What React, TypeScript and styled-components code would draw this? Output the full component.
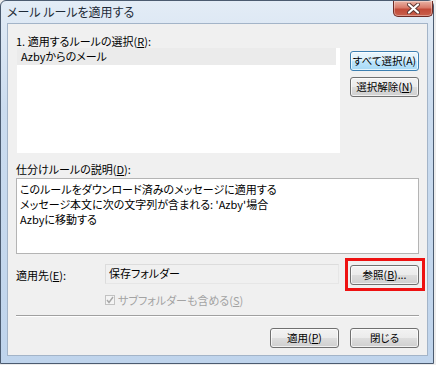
import styled, { createGlobalStyle } from "styled-components";

const GlobalStyle = createGlobalStyle`
  html, body {
    margin: 0;
    padding: 0;
    background: #ececec;
  }
  body {
    font-family: "Noto Sans CJK JP", "Noto Sans", sans-serif;
    font-size: 11px;
    font-feature-settings: "palt";
    color: #000;
  }
`;

const Window = styled.div`
  width: 434px;
  height: 364px;
  box-sizing: border-box;
  border: 1px solid #4b5b70;
  border-radius: 6px 6px 0 0;
  background: linear-gradient(180deg, #e3ecf6 0%, #cbdcef 30%, #bfd4ec 100%);
  display: flex;
  flex-direction: column;
`;

const TitleBar = styled.div`
  height: 22px;
  display: flex;
  align-items: flex-start;
  justify-content: space-between;
  padding-left: 6px;
`;

const Title = styled.div`
  font-size: 12px;
  line-height: 22px;
  color: #1e2a38;
`;

const CloseButton = styled.div`
  width: 40px;
  height: 16px;
  box-sizing: border-box;
  border: 1px solid #6e2b25;
  border-top: none;
  border-radius: 0 0 5px 5px;
  background: linear-gradient(180deg, #eab4a6 0%, #d87a69 45%, #c24a38 55%, #c9604c 100%);
  box-shadow: inset 0 0 0 1px rgba(255, 255, 255, 0.35);
  display: flex;
  align-items: center;
  justify-content: center;
`;

const Client = styled.div`
  flex: 1;
  margin: 0 5px 7px 6px;
  border: 1px solid #a3b4c8;
  background: #f0f0f0;
  padding: 11px 8px 0 8px;
  display: flex;
  flex-direction: column;
`;

const TopRow = styled.div`
  display: flex;
  gap: 10px;
`;

const LeftColumn = styled.div`
  width: 324px;
  display: flex;
  flex-direction: column;
`;

const Label = styled.div<{ $mt?: number }>`
  line-height: 13px;
  height: 13px;
  margin-top: ${(p) => p.$mt ?? 0}px;
  white-space: nowrap;
`;

const Key = styled.span`
  text-decoration: underline;
  text-underline-offset: 1px;
`;

const ListBox = styled.div`
  margin-left: 1px;
  height: 105px;
  background: #fff;
`;

const ListRow = styled.div<{ $selected?: boolean }>`
  width: 319px;
  height: 17px;
  line-height: 17px;
  padding-left: 4px;
  box-sizing: border-box;
  background: ${(p) => (p.$selected ? "#ebebeb" : "transparent")};
`;

const ButtonColumn = styled.div`
  padding-top: 16px;
  display: flex;
  flex-direction: column;
  gap: 6px;
`;

const Button = styled.div<{ $default?: boolean }>`
  width: 69px;
  height: 20px;
  box-sizing: border-box;
  border: 1px solid ${(p) => (p.$default ? "#3c7fb1" : "#707070")};
  border-radius: 3px;
  background: ${(p) =>
    p.$default
      ? "linear-gradient(180deg, #eaf6fd 0%, #d9f0fc 50%, #bee6fd 50%, #a7d9f5 100%)"
      : "linear-gradient(180deg, #f2f2f2 0%, #ebebeb 50%, #dddddd 50%, #cfcfcf 100%)"};
  box-shadow: inset 0 0 0 1px rgba(255, 255, 255, 0.7);
  display: flex;
  align-items: center;
  justify-content: center;
  font-size: 10.5px;
  line-height: 18px;
  white-space: nowrap;
`;

const DescBox = styled.div`
  margin-top: 2px;
  height: 76px;
  box-sizing: border-box;
  border: 1px solid #b4b4b4;
  background: #fff;
  padding: 3px 0 0 3px;
  line-height: 15px;
`;

const TargetRow = styled.div`
  margin-top: 10px;
  display: flex;
  align-items: center;
  height: 20px;
`;

const TargetLabel = styled.div`
  width: 89px;
  line-height: 20px;
  padding-top: 2px;
`;

const FolderField = styled.div`
  width: 234px;
  height: 20px;
  box-sizing: border-box;
  border: 1px solid #dcdcdc;
  border-right-color: #e6e6e6;
  border-bottom-color: #e6e6e6;
  padding-left: 3px;
  line-height: 17px;
`;

const BrowseWrap = styled.div`
  position: relative;
  margin-left: 11px;
  margin-top: 1px;
`;

const Highlight = styled.div`
  position: absolute;
  left: -5px;
  right: -6px;
  top: -7px;
  bottom: -6px;
  border: 3px solid #ee1111;
  pointer-events: none;
`;

const CheckRow = styled.div`
  margin-top: 9px;
  padding-left: 89px;
  display: flex;
  align-items: center;
  gap: 3px;
  height: 13px;
  color: #a3a3a3;
`;

const CheckBox = styled.div`
  width: 10px;
  height: 10px;
  box-sizing: border-box;
  border: 1px solid #c2c2c2;
  background: #f4f4f4;
  display: flex;
  align-items: center;
  justify-content: center;
`;

const Separator = styled.div`
  margin-top: 9px;
  height: 1px;
  background: #a0a0a0;
  border-bottom: 1px solid #ffffff;
`;

const FooterRow = styled.div`
  margin-top: 11px;
  display: flex;
  justify-content: flex-end;
  gap: 11px;
`;

export default function App() {
  return (
    <>
      <GlobalStyle />
      <Window>
        <TitleBar>
          <Title>メール ルールを適用する</Title>
          <CloseButton>
            <svg width="13" height="11" viewBox="0 0 13 11">
              <path d="M2 1.5 L11 9.5 M11 1.5 L2 9.5" stroke="#5b3531" strokeWidth="4" strokeLinecap="round" />
              <path d="M2 1.5 L11 9.5 M11 1.5 L2 9.5" stroke="#ffffff" strokeWidth="2.2" strokeLinecap="round" />
            </svg>
          </CloseButton>
        </TitleBar>
        <Client>
          <TopRow>
            <LeftColumn>
              <Label>
                1. 適用するルールの選択(<Key>R</Key>):
              </Label>
              <ListBox>
                <ListRow $selected>Azbyからのメール</ListRow>
              </ListBox>
            </LeftColumn>
            <ButtonColumn>
              <Button $default>すべて選択(A)</Button>
              <Button>
                選択解除(<Key>N</Key>)
              </Button>
            </ButtonColumn>
          </TopRow>

          <Label $mt={10}>
            仕分けルールの説明(<Key>D</Key>):
          </Label>
          <DescBox>
            <div>このルールをダウンロード済みのメッセージに適用する</div>
            <div>メッセージ本文に次の文字列が含まれる: 'Azby'場合</div>
            <div>Azbyに移動する</div>
          </DescBox>

          <TargetRow>
            <TargetLabel>
              適用先(<Key>E</Key>):
            </TargetLabel>
            <FolderField>保存フォルダー</FolderField>
            <BrowseWrap>
              <Button>
                参照(<Key>B</Key>)...
              </Button>
              <Highlight />
            </BrowseWrap>
          </TargetRow>

          <CheckRow>
            <CheckBox>
              <svg width="8" height="8" viewBox="0 0 8 8">
                <path d="M1 4 L3 6.5 L7 1" fill="none" stroke="#a8a8a8" strokeWidth="1.4" />
              </svg>
            </CheckBox>
            <span>
              サブフォルダーも含める(<Key>S</Key>)
            </span>
          </CheckRow>

          <Separator />

          <FooterRow>
            <Button>
              適用(<Key>P</Key>)
            </Button>
            <Button>閉じる</Button>
          </FooterRow>
        </Client>
      </Window>
    </>
  );
}
